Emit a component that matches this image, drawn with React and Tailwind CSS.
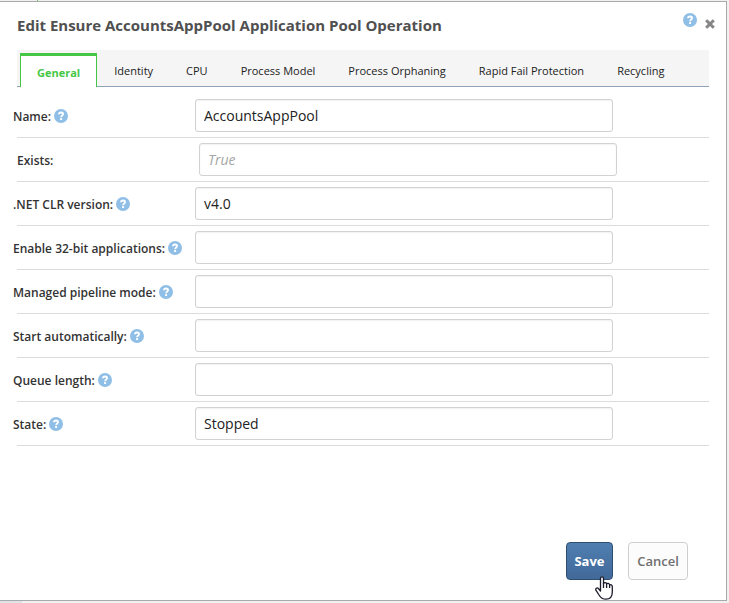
import React from "react";

const TABS = [
  "General",
  "Identity",
  "CPU",
  "Process Model",
  "Process Orphaning",
  "Rapid Fail Protection",
  "Recycling",
];

const FIELDS = [
  { id: "name", label: "Name:", value: "AccountsAppPool", help: true },
  { id: "exists", label: "Exists:", placeholder: "True" },
  { id: "clr", label: ".NET CLR version:", value: "v4.0", help: true },
  { id: "bits", label: "Enable 32-bit applications:", help: true },
  { id: "pipeline", label: "Managed pipeline mode:", help: true },
  { id: "autostart", label: "Start automatically:", help: true },
  { id: "queue", label: "Queue length:", help: true },
  { id: "state", label: "State:", value: "Stopped", help: true },
];

function HelpButton({ label }) {
  return (
    <button type="button" aria-label={label} className="block size-3.5 shrink-0">
      <svg viewBox="0 0 14 14" className="block size-3.5" aria-hidden="true">
        <circle cx="7" cy="7" r="7" fill="#8fbee6" />
        <path
          d="M4.9 5.3C5 4 5.9 3.5 7.1 3.5C8.3 3.5 9.1 4.1 9.1 5.1C9.1 6.5 7.2 6.5 7.1 8.2"
          fill="none"
          stroke="#fff"
          strokeWidth="1.8"
        />
        <rect x="6.1" y="9.1" width="2" height="1.9" fill="#fff" />
      </svg>
    </button>
  );
}

function Field({ field }) {
  const indent = field.help ? "-ml-1" : "";
  return (
    <div className="border-b border-[#dcdcdc] py-[5px]">
      <div className={`flex items-center ${indent}`}>
        <div className="flex w-[182px] shrink-0 items-center gap-[3px]">
          <label
            htmlFor={field.id}
            className="pt-0.5 text-[12px] leading-4 font-semibold whitespace-nowrap text-[#333]"
          >
            {field.label}
          </label>
          {field.help && <HelpButton label={`Help for ${field.label}`} />}
        </div>
        <input
          id={field.id}
          type="text"
          defaultValue={field.value}
          placeholder={field.placeholder}
          className="h-[33px] w-full max-w-[418px] rounded-[3px] border border-[#d0d2d4] bg-white px-2 text-[14px] text-[#222] shadow-[inset_0_1px_2px_rgba(0,0,0,0.06)] outline-none placeholder:text-[#a5a5a5] placeholder:italic"
        />
      </div>
    </div>
  );
}

export default function App() {
  return (
    <div className="min-h-screen bg-[#f0f0f0] pr-0.5 font-['Open_Sans','Noto_Sans',sans-serif]">
      <div className="h-px pl-[37px]">
        <div className="h-px w-px bg-[#6cc96c]" />
      </div>
      <div
        role="dialog"
        aria-labelledby="dialog-title"
        className="border-t border-r border-b border-[#a9a9a9] bg-white pr-[17px] pb-5 pl-[17px]"
      >
        <header className="flex h-12 items-start justify-between pt-[11px]">
          <h1
            id="dialog-title"
            className="text-[15px] leading-6 font-bold whitespace-nowrap text-[#505050]"
          >
            Edit Ensure AccountsAppPool Application Pool Operation
          </h1>
          <div className="-mr-1.5 flex items-start gap-2">
            <HelpButton label="Help" />
            <button type="button" aria-label="Close" className="mt-1.5">
              <svg viewBox="0 0 10 10" className="block size-2.5" aria-hidden="true">
                <path d="M1.2 1.2L8.8 8.8M8.8 1.2L1.2 8.8" stroke="#858585" strokeWidth="3" />
              </svg>
            </button>
          </div>
        </header>

        <div
          role="tablist"
          className="flex h-[37px] items-end gap-px border-b border-[#8fa3b7] bg-[#f5f5f5] pl-[3px]"
        >
          {TABS.map((tab, i) => (
            <button
              key={tab}
              type="button"
              role="tab"
              aria-selected={i === 0}
              className={
                i === 0
                  ? "-mb-px h-[34px] border-x border-t-3 border-x-[#45c745] border-t-[#45c745] bg-white px-4 pt-1 text-[11px] font-bold text-[#45c745]"
                  : "h-[31px] px-4 pt-0.5 text-[11px] whitespace-nowrap text-[#222]"
              }
            >
              {tab}
            </button>
          ))}
        </div>

        <form className="pt-[7px]">
          {FIELDS.map((field) => (
            <Field key={field.id} field={field} />
          ))}

          <div className="mt-24 mr-[21px] flex justify-end gap-[15px]">
            <div className="relative">
              <button
                type="button"
                className="h-[38px] w-[47px] rounded border border-[#2f4d6e] bg-linear-to-b from-[#4f7fb0] to-[#41699a] pt-0.5 text-[13px] font-bold text-white"
              >
                Save
              </button>
              <svg
                viewBox="0 0 18 24"
                className="pointer-events-none absolute top-[34px] left-[29px] h-6 w-[18px]"
                aria-hidden="true"
              >
                <path
                  d="M5.5 15V2.5C5.5 0.3 8.5 0.3 8.5 2.5V7.5C9 6.2 11.5 6.4 11.6 8C12.3 7 14.4 7.3 14.6 9C15.4 8.3 17.3 8.8 17.3 10.6V16C17.3 20.5 15 23.2 11 23.2C7 23.2 5.5 21.5 4 19L0.9 14.2C0.2 12.5 2 11.2 3.4 12.5Z"
                  fill="#fff"
                  stroke="#1b1b2b"
                  strokeWidth="1.3"
                  strokeLinejoin="round"
                />
                <path d="M8.5 7V12M11.6 8V12M14.6 9V12" stroke="#1b1b2b" strokeWidth="1.3" />
              </svg>
            </div>
            <button
              type="button"
              className="h-[38px] w-[60px] rounded border border-[#cfcfcf] bg-[#fcfcfd] pt-0.5 text-[13px] font-semibold text-[#707070]"
            >
              Cancel
            </button>
          </div>
        </form>
      </div>
      <div className="h-0.5 w-[22px] bg-[#dde3e6]" />
    </div>
  );
}
